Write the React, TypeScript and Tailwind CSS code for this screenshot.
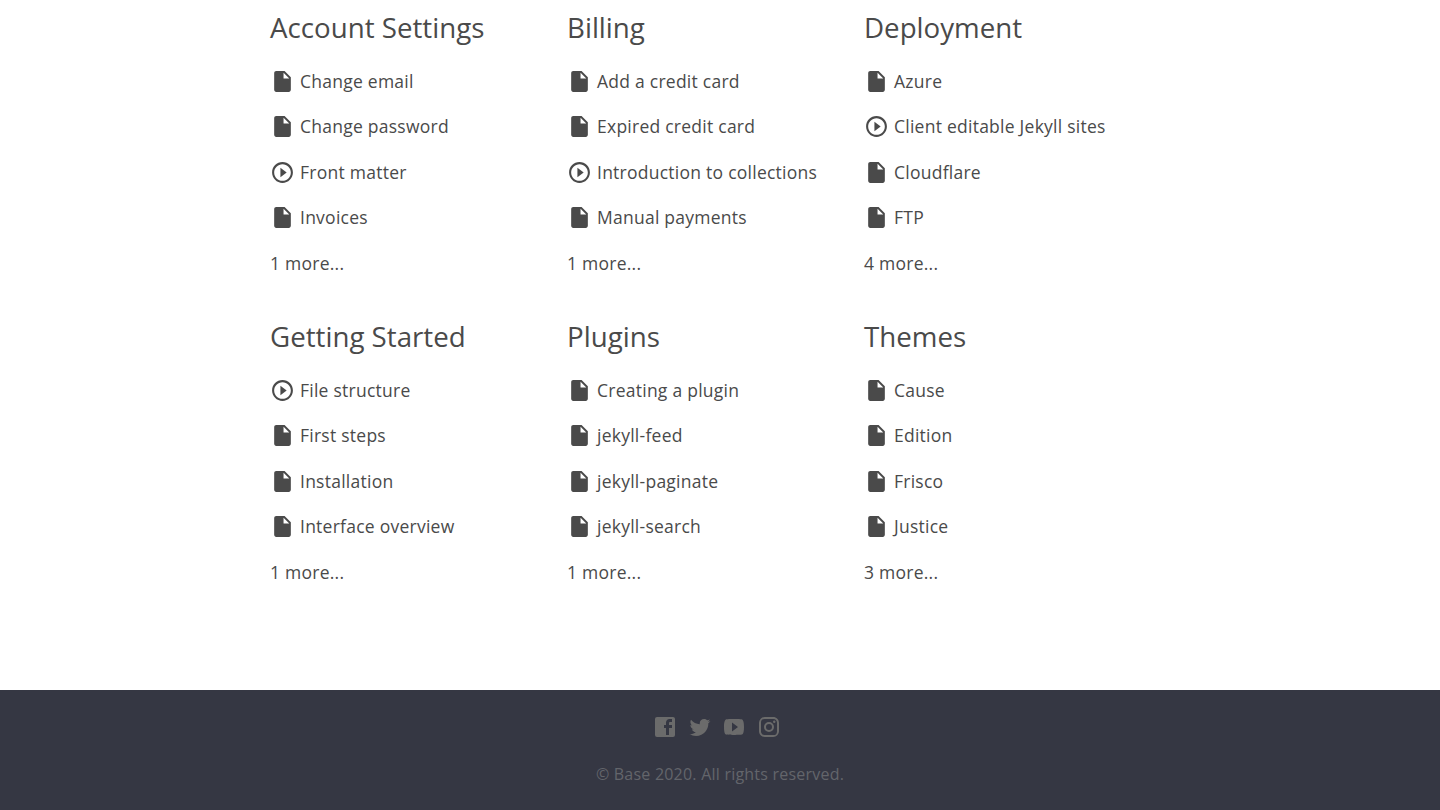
import React from 'react';

type TDoc = {
  title: string;
  video?: boolean;
}

type TCategory = {
  name: string;
  docs: TDoc[];
  more: number;
}

const categories: TCategory[] = [
  {
    name: 'Account Settings',
    docs: [{ title: 'Change email' }, { title: 'Change password' }, { title: 'Front matter', video: true }, { title: 'Invoices' }],
    more: 1,
  },
  {
    name: 'Billing',
    docs: [{ title: 'Add a credit card' }, { title: 'Expired credit card' }, { title: 'Introduction to collections', video: true }, { title: 'Manual payments' }],
    more: 1,
  },
  {
    name: 'Deployment',
    docs: [{ title: 'Azure' }, { title: 'Client editable Jekyll sites', video: true }, { title: 'Cloudflare' }, { title: 'FTP' }],
    more: 4,
  },
  {
    name: 'Getting Started',
    docs: [{ title: 'File structure', video: true }, { title: 'First steps' }, { title: 'Installation' }, { title: 'Interface overview' }],
    more: 1,
  },
  {
    name: 'Plugins',
    docs: [{ title: 'Creating a plugin' }, { title: 'jekyll-feed' }, { title: 'jekyll-paginate' }, { title: 'jekyll-search' }],
    more: 1,
  },
  {
    name: 'Themes',
    docs: [{ title: 'Cause' }, { title: 'Edition' }, { title: 'Frisco' }, { title: 'Justice' }],
    more: 3,
  },
]

const socials = [
  {
    name: 'Facebook',
    path: 'M19,4V7H17A1,1 0 0,0 16,8V10H19V13H16V20H13V13H11V10H13V7.5C13,5.56 14.57,4 16.5,4M20,2H4A2,2 0 0,0 2,4V20A2,2 0 0,0 4,22H20A2,2 0 0,0 22,20V4C22,2.89 21.1,2 20,2Z',
  },
  {
    name: 'Twitter',
    path: 'M22.46,6C21.69,6.35 20.86,6.58 20,6.69C20.88,6.16 21.56,5.32 21.88,4.31C21.05,4.81 20.13,5.16 19.16,5.36C18.37,4.5 17.26,4 16,4C13.65,4 11.73,5.92 11.73,8.29C11.73,8.63 11.77,8.96 11.84,9.27C8.28,9.09 5.11,7.38 3,4.79C2.63,5.42 2.42,6.16 2.42,6.94C2.42,8.43 3.17,9.75 4.33,10.5C3.62,10.5 2.96,10.3 2.38,10V10.03C2.38,12.11 3.86,13.85 5.82,14.24C5.46,14.34 5.08,14.39 4.69,14.39C4.42,14.39 4.15,14.36 3.89,14.31C4.43,16 6,17.26 7.89,17.29C6.43,18.45 4.58,19.13 2.56,19.13C2.22,19.13 1.88,19.11 1.54,19.07C3.44,20.29 5.7,21 8.12,21C16,21 20.33,14.46 20.33,8.79C20.33,8.6 20.33,8.42 20.32,8.23C21.16,7.63 21.88,6.87 22.46,6Z',
  },
  {
    name: 'YouTube',
    path: 'M10,16.5V7.5L16,12M20,4.4C19.4,4.2 15.7,4 12,4C8.3,4 4.6,4.19 4,4.38C2.44,4.9 2,8.4 2,12C2,15.59 2.44,19.1 4,19.61C4.6,19.81 8.3,20 12,20C15.7,20 19.4,19.81 20,19.61C21.56,19.1 22,15.59 22,12C22,8.4 21.56,4.91 20,4.4Z',
  },
  {
    name: 'Instagram',
    path: 'M7.8,2H16.2C19.4,2 22,4.6 22,7.8V16.2A5.8,5.8 0 0,1 16.2,22H7.8C4.6,22 2,19.4 2,16.2V7.8A5.8,5.8 0 0,1 7.8,2M7.6,4A3.6,3.6 0 0,0 4,7.6V16.4C4,18.39 5.61,20 7.6,20H16.4A3.6,3.6 0 0,0 20,16.4V7.6C20,5.61 18.39,4 16.4,4H7.6M17.25,5.5A1.25,1.25 0 0,1 18.5,6.75A1.25,1.25 0 0,1 17.25,8A1.25,1.25 0 0,1 16,6.75A1.25,1.25 0 0,1 17.25,5.5M12,7A5,5 0 0,1 17,12A5,5 0 0,1 12,17A5,5 0 0,1 7,12A5,5 0 0,1 12,7M12,9A3,3 0 0,0 9,12A3,3 0 0,0 12,15A3,3 0 0,0 15,12A3,3 0 0,0 12,9Z',
  },
]

function DocIcon({ video }: { video?: boolean }) {
  return (
    <svg viewBox="0 0 24 24" className="w-[25px] h-[25px] shrink-0 fill-current">
      {video ? (
        <path d="M10 16.5l6-4.5-6-4.5v9zM12 2C6.48 2 2 6.48 2 12s4.48 10 10 10 10-4.48 10-10S17.52 2 12 2zm0 18c-4.41 0-8-3.59-8-8s3.59-8 8-8 8 3.59 8 8-3.59 8-8 8z" />
      ) : (
        <path d="M6 2c-1.1 0-1.99.9-1.99 2L4 20c0 1.1.89 2 1.99 2H18c1.1 0 2-.9 2-2V8l-6-6H6zm7 7V3.5L18.5 9H13z" />
      )}
    </svg>
  )
}

function Category({ name, docs, more }: TCategory) {
  return (
    <section className="h-[309px]">
      <h2 className="h-[58.6px] pt-[7px] text-[27.7px] leading-10 tracking-normal whitespace-nowrap">{name}</h2>
      <ul>
        {docs.map((doc) => (
          <li key={doc.title} className="h-[45.5px]">
            <a href="#" className="flex h-full items-center gap-[5px] whitespace-nowrap">
              <DocIcon video={doc.video} />
              <span className="pb-px">{doc.title}</span>
            </a>
          </li>
        ))}
        <li className="h-[45.5px]">
          <a href="#" className="flex h-full items-center pb-px">{more} more...</a>
        </li>
      </ul>
    </section>
  )
}

function App() {
  return (
    <div className="flex min-h-screen flex-col bg-white font-['Open_Sans',sans-serif] text-[17.5px] tracking-[0.25px] text-[#4a4a4a]">
      <main className="flex-1">
        <div className="mx-auto grid w-[900px] grid-cols-[repeat(3,297px)]">
          {categories.map((category) => (
            <Category key={category.name} {...category} />
          ))}
        </div>
      </main>
      <footer className="flex h-[120px] flex-col items-center bg-[#353743] pt-[25px] text-[#63656b]">
        <div className="flex gap-[10.7px] pr-[6px]">
          {socials.map((social) => (
            <a key={social.name} href="#" aria-label={social.name}>
              <svg viewBox="0 0 24 24" className="h-6 w-6 fill-[#6b6b6b]">
                <path d={social.path} />
              </svg>
            </a>
          ))}
        </div>
        <p className="mt-[23px] text-base leading-6 tracking-[0.22px]">© Base 2020. All rights reserved.</p>
      </footer>
    </div>
  )
}

export default App
